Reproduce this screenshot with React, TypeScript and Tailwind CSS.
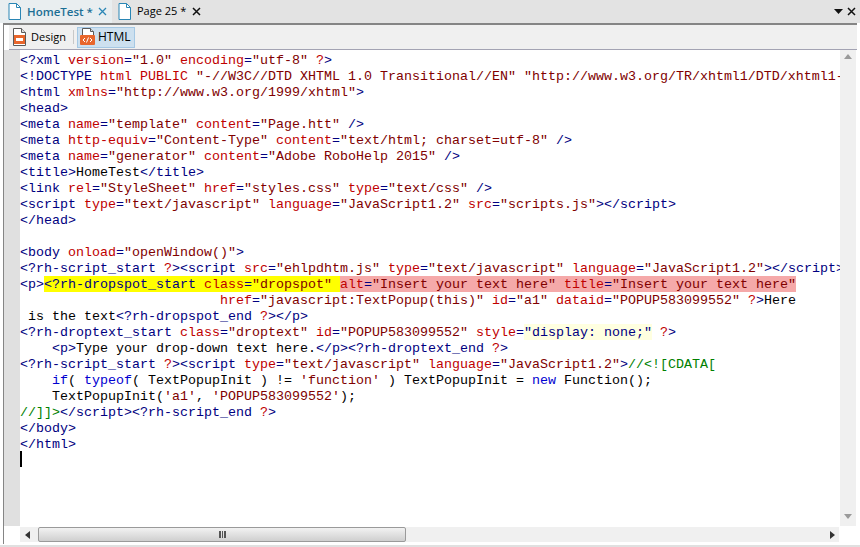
const tones: Record<string, string> = {
  t: "text-[#000080]",
  a: "text-[#c00000]",
  v: "text-[#800000]",
  k: "text-[#0000d0]",
  g: "text-[#008000]",
  q: "text-[#c00000]",
  l: "bg-[#ffffe0] pt-[1px] text-[#000080]",
};

// markup: {tone|text}, the dropspot row is written out by hand below
const lines = [
  '{t|<?xml} {a|version}{t|=}{v|"1.0"} {a|encoding}{t|=}{v|"utf-8"} {q|?}{t|>}',
  '{t|<!DOCTYPE} {a|html} {a|PUBLIC} {v|"-//W3C//DTD XHTML 1.0 Transitional//EN"} {v|"http://www.w3.org/TR/xhtml1/DTD/xhtml1-transitional.dtd">}',
  '{t|<html} {a|xmlns}{t|=}{v|"http://www.w3.org/1999/xhtml"}{t|>}',
  "{t|<head>}",
  '{t|<meta} {a|name}{t|=}{v|"template"} {a|content}{t|=}{v|"Page.htt"} {t|/>}',
  '{t|<meta} {a|http-equiv}{t|=}{v|"Content-Type"} {a|content}{t|=}{v|"text/html; charset=utf-8"} {t|/>}',
  '{t|<meta} {a|name}{t|=}{v|"generator"} {a|content}{t|=}{v|"Adobe RoboHelp 2015"} {t|/>}',
  "{t|<title>}HomeTest{t|</title>}",
  '{t|<link} {a|rel}{t|=}{v|"StyleSheet"} {a|href}{t|=}{v|"styles.css"} {a|type}{t|=}{v|"text/css"} {t|/>}',
  '{t|<script} {a|type}{t|=}{v|"text/javascript"} {a|language}{t|=}{v|"JavaScript1.2"} {a|src}{t|=}{v|"scripts.js"}{t|></script>}',
  "{t|</head>}",
  "",
  '{t|<body} {a|onload}{t|=}{v|"openWindow()"}{t|>}',
  '{t|<?rh-script_start} {q|?}{t|><script} {a|src}{t|=}{v|"ehlpdhtm.js"} {a|type}{t|=}{v|"text/javascript"} {a|language}{t|=}{v|"JavaScript1.2"}{t|></script>}',
  "HIGHLIGHT",
  '                         {a|href}{t|=}{v|"javascript:TextPopup(this)"} {a|id}{t|=}{v|"a1"} {a|dataid}{t|=}{v|"POPUP583099552"} {q|?}{t|>}Here',
  " is the text{t|<?rh-dropspot_end} {q|?}{t|></p>}",
  '{t|<?rh-droptext_start} {a|class}{t|=}{v|"droptext"} {a|id}{t|=}{v|"POPUP583099552"} {a|style}{t|=}{l|"display: none;"} {q|?}{t|>}',
  "    {t|<p>}Type your drop-down text here.{t|</p><?rh-droptext_end} {q|?}{t|>}",
  '{t|<?rh-script_start} {q|?}{t|><script} {a|type}{t|=}{v|"text/javascript"} {a|language}{t|=}{v|"JavaScript1.2"}{t|>}{g|//<![CDATA[}',
  "    {k|if}( {k|typeof}( TextPopupInit ) != {v|'function'} ) TextPopupInit = {k|new} Function();",
  "    TextPopupInit({v|'a1'}, {v|'POPUP583099552'});",
  "{g|//]]>}{t|</script><?rh-script_end} {q|?}{t|>}",
  "{t|</body>}",
  "{t|</html>}",
];

function Code({ src }: { src: string }) {
  const parts = src.split(/(\{[a-z]\|[^}]*\})/).filter(Boolean);
  return (
    <>
      {parts.map((part, i) => {
        const m = part.match(/^\{([a-z])\|([^}]*)\}$/);
        if (!m) return <span key={i}>{part}</span>;
        return (
          <span key={i} className={tones[m[1]]}>
            {m[2]}
          </span>
        );
      })}
    </>
  );
}

function DocIcon({ className }: { className: string }) {
  return (
    <svg width="13" height="17" viewBox="0 0 13 17" fill="none" className={className}>
      <path d="M1 .5h7.5l4 4v12H1z" fill="#fff" stroke="currentColor" />
      <path d="M8.5.5v4h4" stroke="currentColor" />
    </svg>
  );
}

function DesignIcon() {
  return (
    <svg width="13" height="18" viewBox="0 0 13 18" fill="none">
      <path d="M.5.5h8l4 4v13H.5z" fill="#fff" stroke="#5a5a5a" />
      <path d="M8.5.5v4h4" fill="#ddd" stroke="#5a5a5a" />
      <rect x="1" y="7" width="11" height="9" fill="#e8662c" />
      <rect x="3" y="10" width="7" height="3" fill="#fff" />
    </svg>
  );
}

function HtmlIcon() {
  return (
    <svg width="15" height="18" viewBox="0 0 15 18" fill="none">
      <path d="M2.5.5h8l3 3v8h-11z" fill="#fff" stroke="#5a5a5a" />
      <path d="M10.5.5v3h3" fill="#ddd" stroke="#5a5a5a" />
      <rect x="0" y="7" width="15" height="10" rx="1" fill="#e8662c" />
      <path d="M5 10l-2 2 2 2M10 10l2 2-2 2M8.5 9.5l-2 5" stroke="#fff" strokeWidth="1" />
    </svg>
  );
}

function Arrow({ dir }: { dir: "up" | "down" | "left" | "right" }) {
  const d = { up: "M0 5L4 0l4 5z", down: "M0 0h8L4 5z", left: "M5 0v8L0 4z", right: "M0 0v8l5-4z" }[dir];
  const fill = dir === "up" || dir === "down" ? "#9a9a9a" : "#333";
  return (
    <svg width="8" height="8" viewBox="0 0 8 8">
      <path d={d} fill={fill} />
    </svg>
  );
}

export default function App() {
  return (
    <div className="flex flex-col w-[860px] h-[547px] overflow-hidden bg-white font-['Open_Sans',sans-serif] text-[11px] text-black">
      {/* Tab strip */}
      <div className="flex items-stretch h-[23px] shrink-0 bg-[#e3e3e3] whitespace-nowrap">
        <div className="flex items-center w-[112px] shrink-0 pl-[8px] bg-[#e9eef0] text-[#1c6f95]">
          <DocIcon className="shrink-0 text-[#2a86b5]" />
          <span className="ml-[6px] font-semibold text-[11.5px]">HomeTest *</span>
          <svg width="9" height="9" viewBox="0 0 9 9" className="ml-auto mr-[5px] shrink-0">
            <path d="M1 1l7 7M8 1L1 8" stroke="#2a86b5" strokeWidth="1.3" />
          </svg>
        </div>
        <div className="flex items-center ml-[5px] w-[84px] shrink-0 pl-[1px]">
          <DocIcon className="shrink-0 text-[#2a86b5]" />
          <span className="ml-[6px]">Page 25 *</span>
          <svg width="9" height="9" viewBox="0 0 9 9" className="ml-auto shrink-0">
            <path d="M1 1l7 7M8 1L1 8" stroke="#111" strokeWidth="1.5" />
          </svg>
        </div>
        <div className="flex items-center gap-[4px] ml-auto pr-[4px]">
          <svg width="9" height="5" viewBox="0 0 9 5">
            <path d="M0 0h9L4.5 5z" fill="#111" />
          </svg>
          <svg width="9" height="9" viewBox="0 0 9 9">
            <path d="M1 1l7 7M8 1L1 8" stroke="#111" strokeWidth="1.5" />
          </svg>
        </div>
      </div>

      <div className="flex flex-col ml-[3px] mr-[3px] h-[521px] shrink-0 border-t-2 border-l border-[#858585]">
        {/* Design / HTML switch */}
        <div className="flex items-center h-[25px] shrink-0 ml-[5px] pl-[4px] bg-[#f0f0f0] border-b border-[#a3a3b3]">
          <DesignIcon />
          <span className="ml-[5px] w-[37px]">Design</span>
          <div className="w-px h-[14px] ml-[5px] bg-[#c8c8c8]" />
          <div className="flex items-center h-[21px] ml-[3px] w-[58px] pl-[2px] bg-[#cde0ef] border border-[#a5c8e4]">
            <HtmlIcon />
            <span className="ml-[3px] text-[12px]">HTML</span>
          </div>
        </div>

        {/* Editor */}
        <div className="flex h-[476px] shrink-0">
          <div className="w-[16px] shrink-0 bg-[#e0e0e0]" />
          <div className="flex-1 min-w-0 overflow-hidden pt-[3px] font-['Liberation_Mono',monospace] text-[13.33px] leading-[16px] whitespace-pre">
            {lines.map((line, i) =>
              line === "HIGHLIGHT" ? (
                <div key={i} className="h-[16px]">
                  <Code src="{t|<p>}" />
                  <span className="bg-[#ffff00] pt-[1px]">
                    <Code src='{t|<?rh-dropspot_start} {a|class}{t|=}{v|"dropspot"} ' />
                  </span>
                  <span className="bg-[#f5a9a9] pt-[1px]">
                    <Code src='{a|alt}{t|=}{v|"Insert your text here"} {a|title}{t|=}{v|"Insert your text here"}' />
                  </span>
                </div>
              ) : (
                <div key={i} className="h-[16px]">
                  <Code src={line} />
                </div>
              )
            )}
            <div className="w-[2px] h-[16px] -mt-[2px] bg-black" />
          </div>
          <div className="flex flex-col items-center justify-between w-[16px] shrink-0 mr-[1px] py-[4px] bg-[#f0f0f0]">
            <Arrow dir="up" />
            <Arrow dir="down" />
          </div>
        </div>

        {/* Horizontal scrollbar */}
        <div className="flex h-[15px] mt-[1px] shrink-0 ml-[16px] mr-[18px] bg-[#f0f0f0]">
          <div className="flex items-center justify-center w-[18px] shrink-0">
            <Arrow dir="left" />
          </div>
          <div className="flex items-center justify-center w-[368px] shrink-0 rounded-[2px] border border-[#9a9a9a] bg-gradient-to-b from-[#f2f2f2] to-[#cfcfcf]">
            <div className="w-[7px] h-[7px] border-x-2 border-[#555] bg-[linear-gradient(90deg,transparent_35%,#555_35%,#555_65%,transparent_65%)]" />
          </div>
          <div className="flex items-center justify-end flex-1 pr-[1px]">
            <Arrow dir="right" />
          </div>
        </div>
      </div>
      <div className="h-[2px] mt-auto shrink-0 bg-[#e0e0e0]" />
    </div>
  );
}
